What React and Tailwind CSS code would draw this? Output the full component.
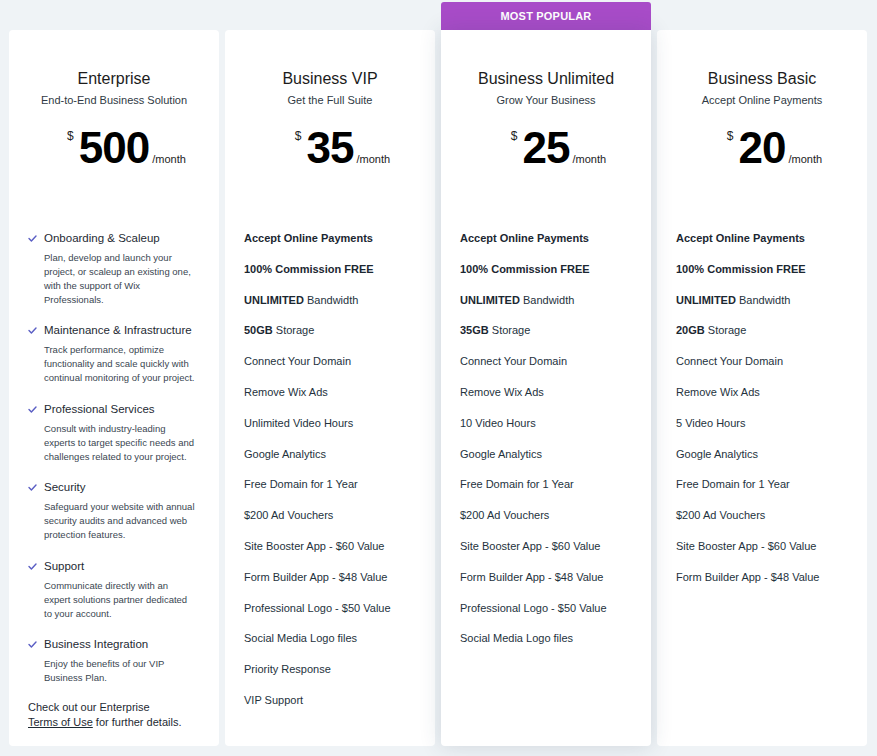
import React from "react";

const plans = [
  {
    name: "Business VIP",
    sub: "Get the Full Suite",
    price: "35",
    features: [
      [["Accept Online Payments", true]],
      [["100% Commission FREE", true]],
      [["UNLIMITED", true], [" Bandwidth", false]],
      [["50GB", true], [" Storage", false]],
      [["Connect Your Domain", false]],
      [["Remove Wix Ads", false]],
      [["Unlimited Video Hours", false]],
      [["Google Analytics", false]],
      [["Free Domain for 1 Year", false]],
      [["$200 Ad Vouchers", false]],
      [["Site Booster App - $60 Value", false]],
      [["Form Builder App - $48 Value", false]],
      [["Professional Logo - $50 Value", false]],
      [["Social Media Logo files", false]],
      [["Priority Response", false]],
      [["VIP Support", false]],
    ],
  },
  {
    name: "Business Unlimited",
    sub: "Grow Your Business",
    price: "25",
    popular: true,
    features: [
      [["Accept Online Payments", true]],
      [["100% Commission FREE", true]],
      [["UNLIMITED", true], [" Bandwidth", false]],
      [["35GB", true], [" Storage", false]],
      [["Connect Your Domain", false]],
      [["Remove Wix Ads", false]],
      [["10 Video Hours", false]],
      [["Google Analytics", false]],
      [["Free Domain for 1 Year", false]],
      [["$200 Ad Vouchers", false]],
      [["Site Booster App - $60 Value", false]],
      [["Form Builder App - $48 Value", false]],
      [["Professional Logo - $50 Value", false]],
      [["Social Media Logo files", false]],
    ],
  },
  {
    name: "Business Basic",
    sub: "Accept Online Payments",
    price: "20",
    features: [
      [["Accept Online Payments", true]],
      [["100% Commission FREE", true]],
      [["UNLIMITED", true], [" Bandwidth", false]],
      [["20GB", true], [" Storage", false]],
      [["Connect Your Domain", false]],
      [["Remove Wix Ads", false]],
      [["5 Video Hours", false]],
      [["Google Analytics", false]],
      [["Free Domain for 1 Year", false]],
      [["$200 Ad Vouchers", false]],
      [["Site Booster App - $60 Value", false]],
      [["Form Builder App - $48 Value", false]],
    ],
  },
];

const enterpriseItems = [
  {
    t: "Onboarding & Scaleup",
    d: ["Plan, develop and launch your", "project, or scaleup an existing one,", "with the support of Wix", "Professionals."],
  },
  {
    t: "Maintenance & Infrastructure",
    d: ["Track performance, optimize", "functionality and scale quickly with", "continual monitoring of your project."],
  },
  {
    t: "Professional Services",
    d: ["Consult with industry-leading", "experts to target specific needs and", "challenges related to your project."],
  },
  {
    t: "Security",
    d: ["Safeguard your website with annual", "security audits and advanced web", "protection features."],
  },
  {
    t: "Support",
    d: ["Communicate directly with an", "expert solutions partner dedicated", "to your account."],
  },
  {
    t: "Business Integration",
    d: ["Enjoy the benefits of our VIP", "Business Plan."],
  },
];

function Header({ name, sub, price }) {
  return (
    <div className="flex flex-col items-center pt-[40px] h-[200px]">
      <div className="text-[16px] leading-[18px] text-[#1c1c1c]">{name}</div>
      <div className="mt-[5px] text-[11px] leading-[14px] text-[#2f3a44]">{sub}</div>
      <div className="mt-[19px] relative">
        <span className="absolute right-full mr-[5px] top-[4px] text-[12px] leading-[12px] text-[#222]">$</span>
        <span className="block text-[44px] leading-[44px] font-bold tracking-[-1px] text-black">{price}</span>
        <span className="absolute left-full ml-[3px] bottom-[5px] text-[11px] leading-[11px] text-[#222] whitespace-nowrap">/month</span>
      </div>
    </div>
  );
}

function Check() {
  return (
    <svg width="9" height="7" viewBox="0 0 9 7" className="shrink-0 mt-[5px]">
      <path d="M1 3.6 L3.4 6 L8 1" fill="none" stroke="#5a5ec4" strokeWidth="1.4" strokeLinecap="round" strokeLinejoin="round" />
    </svg>
  );
}

function EnterpriseCard() {
  return (
    <div className="bg-white rounded-[4px] flex-1 flex flex-col">
      <Header name="Enterprise" sub="End-to-End Business Solution" price="500" />
      <div className="pl-[19px] pr-[10px] flex flex-col gap-[15.4px]">
        {enterpriseItems.map((it) => (
          <div key={it.t} className="flex gap-[7px]">
            <Check />
            <div>
              <div className="text-[11.5px] leading-[16px] text-[#1e2a33]">{it.t}</div>
              <div className="mt-[5px] text-[9.5px] leading-[14px] text-[#3a4651]">
                {it.d.map((l) => (
                  <div key={l} className="whitespace-nowrap">{l}</div>
                ))}
              </div>
            </div>
          </div>
        ))}
      </div>
      <div className="pl-[19px] mt-[15px] text-[11px] leading-[15px] text-[#1e2a33]">
        <div>Check out our Enterprise</div>
        <div>
          <span className="underline">Terms of Use</span> for further details.
        </div>
      </div>
    </div>
  );
}

function PlanCard({ plan }) {
  return (
    <div
      className={
        "bg-white rounded-[4px] flex-1 flex flex-col " +
        (plan.popular ? "rounded-t-none relative z-10 shadow-[0_0_22px_rgba(40,60,90,0.16)]" : "")
      }
    >
      <Header name={plan.name} sub={plan.sub} price={plan.price} />
      <div className="pl-[19px] flex flex-col gap-[14.8px]">
        {plan.features.map((f, i) => (
          <div key={i} className="text-[11px] leading-[16px] text-[#24323d] whitespace-nowrap">
            {f.map(([txt, b], j) => (
              <span key={j} className={b ? "font-bold text-[#1b2731]" : ""}>
                {txt}
              </span>
            ))}
          </div>
        ))}
      </div>
    </div>
  );
}

export default function App() {
  return (
    <div
      className="w-[877px] h-[756px] bg-[#eff3f6] pt-[2px] pb-[10px] pl-[9px] pr-[10px] flex gap-[6px]"
      style={{ fontFamily: '"Liberation Sans", Arial, sans-serif' }}
    >
      <div className="w-[210px] flex flex-col pt-[28px]">
        <EnterpriseCard />
      </div>
      {plans.map((p) => (
        <div key={p.name} className={"w-[210px] flex flex-col " + (p.popular ? "relative z-10" : "pt-[28px]")}>
          {p.popular && (
            <div className="h-[28px] bg-[#a84cc8] rounded-t-[3px] flex items-center justify-center text-white text-[11px] font-bold tracking-[0.2px]">
              MOST POPULAR
            </div>
          )}
          <PlanCard plan={p} />
        </div>
      ))}
    </div>
  );
}
